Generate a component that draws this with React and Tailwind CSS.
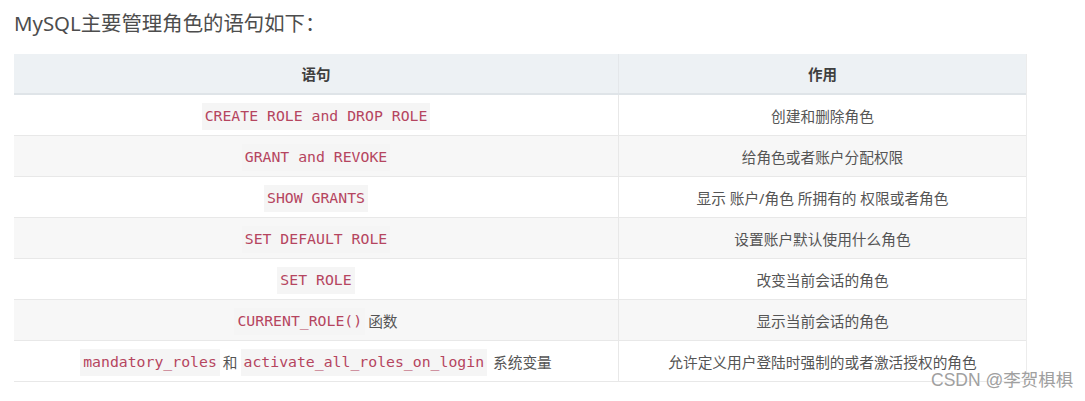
import React from "react";

const mono = { fontFamily: '"DejaVu Sans Mono", "Liberation Mono", monospace' };

function Code({ children }) {
  return (
    <code
      className="bg-[#f5f5f5] text-[#b5455f] px-[3px] py-[2px] text-[14.8px]"
      style={mono}
    >
      {children}
    </code>
  );
}

const rows = [
  { a: <Code>CREATE ROLE and DROP ROLE</Code>, b: "创建和删除角色" },
  { a: <Code>GRANT and REVOKE</Code>, b: "给角色或者账户分配权限" },
  { a: <Code>SHOW GRANTS</Code>, b: "显示 账户/角色 所拥有的 权限或者角色" },
  { a: <Code>SET DEFAULT ROLE</Code>, b: "设置账户默认使用什么角色" },
  { a: <Code>SET ROLE</Code>, b: "改变当前会话的角色" },
  {
    a: (
      <>
        <Code>CURRENT_ROLE()</Code>
        <span className="ml-[3px]">函数</span>
      </>
    ),
    b: "显示当前会话的角色",
  },
  {
    a: (
      <>
        <Code>mandatory_roles</Code>
        <span className="mx-[3px]">和</span>
        <Code>activate_all_roles_on_login</Code>
        <span className="ml-[6px]">系统变量</span>
      </>
    ),
    b: "允许定义用户登陆时强制的或者激活授权的角色",
  },
];

export default function App() {
  return (
    <div
      className="relative w-[1085px] h-[401px] bg-white overflow-hidden"
      style={{ fontFamily: '"Noto Sans", "Noto Sans CJK SC", sans-serif' }}
    >
      <div className="pl-[14px] pt-[7px] h-[54px] text-[20.4px] leading-[32px] text-[#4d4d4d]">
        MySQL主要管理角色的语句如下：
      </div>
      <div className="ml-[14px] w-[1013px] border-r border-[#ececec]">
        <div className="flex h-[41px] bg-[#edf1f4] border-b-2 border-[#dfe4e8] text-[14.5px] font-semibold text-[#3f3f3f]">
          <div className="w-[605px] flex items-center justify-center pt-[2px] border-r border-[#e4e7ea]">语句</div>
          <div className="flex-1 flex items-center justify-center pt-[2px]">作用</div>
        </div>
        {rows.map((r, i) => (
          <div
            key={i}
            className={`flex h-[41px] border-b border-[#e8e8e8] text-[14.7px] text-[#555] ${
              i % 2 === 1 ? "bg-[#f7f7f7]" : "bg-white"
            }`}
          >
            <div className="w-[605px] flex items-center justify-center pt-[3px] border-r border-[#e8e8e8]">{r.a}</div>
            <div className="flex-1 flex items-center justify-center pt-[3px]">{r.b}</div>
          </div>
        ))}
      </div>
      <div
        className="absolute left-[931px] top-[367px] text-[17.5px] text-[#a0a0a0]"
        style={{ fontFamily: '"Liberation Sans", "Noto Sans CJK SC", sans-serif', textShadow: "0 0 2px #fff" }}
      >
        CSDN @李贺椇椇
      </div>
    </div>
  );
}
